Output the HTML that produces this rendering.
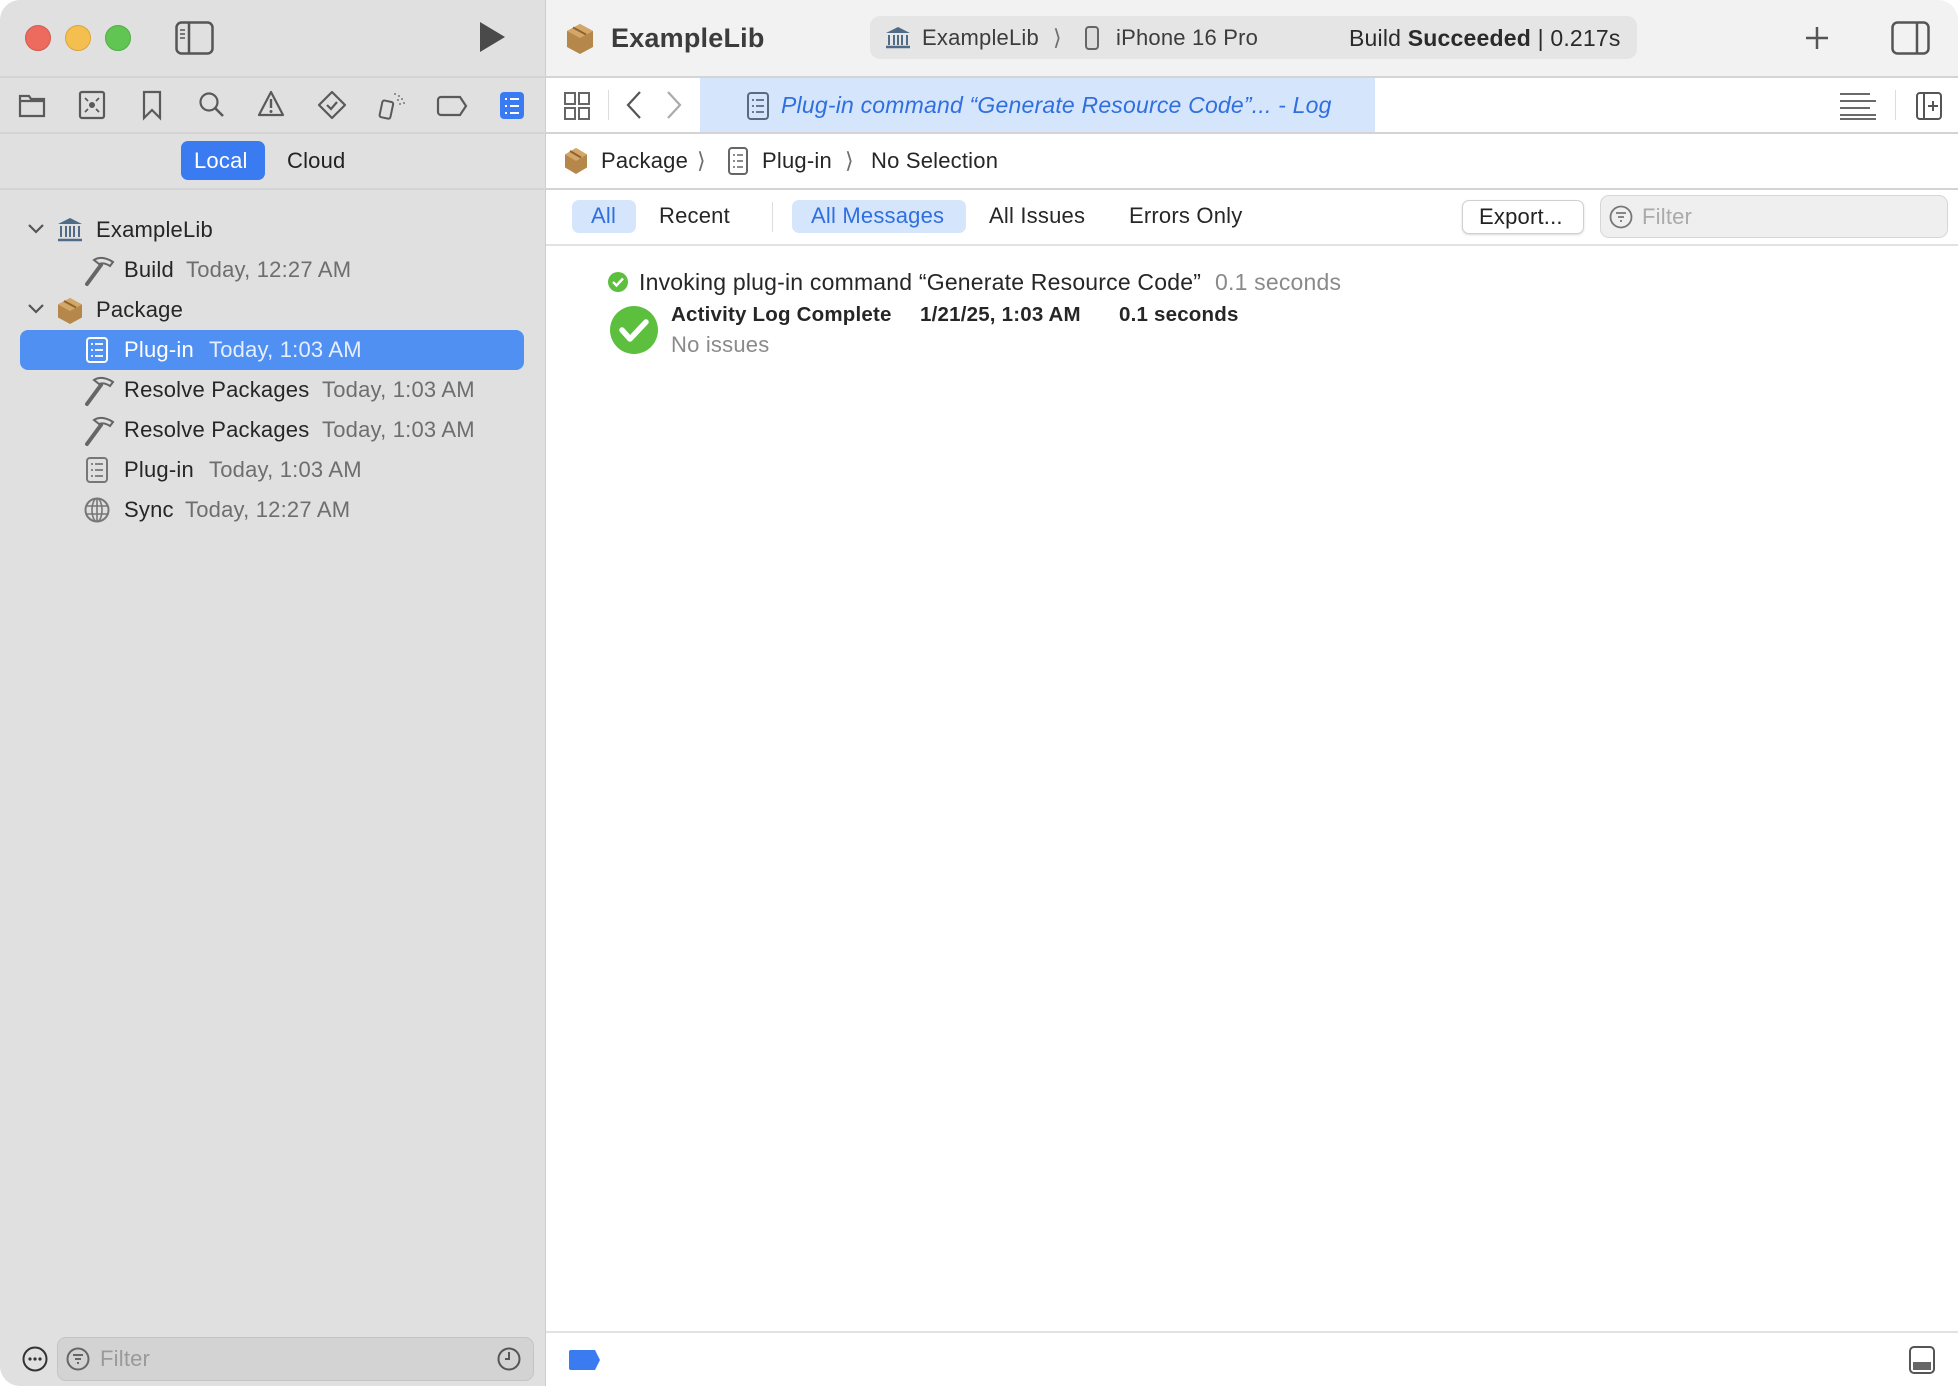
<!DOCTYPE html>
<html><head><meta charset="utf-8"><style>
*{box-sizing:border-box;margin:0;padding:0}
body{width:1958px;height:1386px;background:#fff;font-family:"Liberation Sans",sans-serif;position:relative;overflow:hidden;color:#262626}
.a{position:absolute}
.t{position:absolute;font-size:22px;line-height:24px;white-space:nowrap;letter-spacing:0.2px}
.g{color:#6e6e6e}
svg{position:absolute;overflow:visible}
</style></head><body>
<div class="a" style="left:0;top:0;width:546px;height:1386px;background:#e0e0e0;border-top-left-radius:20px;border-bottom-left-radius:20px"></div>
<div class="a" style="left:546px;top:0;width:1412px;height:77px;background:#f2f2f2;border-top-right-radius:20px"></div>
<div class="a" style="left:545px;top:0;width:1px;height:1386px;background:#cdcdcd"></div>
<div class="a" style="left:0;top:76px;width:1958px;height:2px;background:#d4d4d4"></div>
<div class="a" style="left:0;top:132px;width:1958px;height:2px;background:#d4d4d4"></div>
<div class="a" style="left:0;top:188px;width:1958px;height:2px;background:#d4d4d4"></div>
<div class="a" style="left:546px;top:244px;width:1412px;height:2px;background:#e2e2e2"></div>
<div class="a" style="left:546px;top:1331px;width:1412px;height:2px;background:#e2e2e2"></div>

<div class="a" style="left:25px;top:25px;width:26px;height:26px;border-radius:50%;background:#ec6a5e;border:1px solid #d55a4e"></div>
<div class="a" style="left:65px;top:25px;width:26px;height:26px;border-radius:50%;background:#f4bf4f;border:1px solid #d9a63c"></div>
<div class="a" style="left:105px;top:25px;width:26px;height:26px;border-radius:50%;background:#61c554;border:1px solid #4fae44"></div>
<svg style="left:175px;top:21px" width="40" height="34"><rect x="1.5" y="1.5" width="36" height="31" rx="5" fill="none" stroke="#555" stroke-width="2.5"/><line x1="14" y1="2" x2="14" y2="32" stroke="#555" stroke-width="2.5"/><path d="M5 9h5M5 13h5M5 17h5" stroke="#555" stroke-width="1.6"/></svg>
<svg style="left:480px;top:22px" width="26" height="30"><path d="M0 0L25 15L0 30Z" fill="#4a4a4a"/></svg>

<svg style="left:567px;top:24px" width="26" height="30"><path d="M13 0L26 7V23L13 30L0 23V7Z" fill="#b5874a"/><path d="M13 0L26 7L13 14L0 7Z" fill="#d4a668"/><path d="M6 3.5L19 10.5" stroke="#8a6530" stroke-width="2"/></svg>
<div class="t" style="left:611px;top:23px;font-size:27px;line-height:30px;font-weight:bold;color:#3c3c3c">ExampleLib</div>
<div class="a" style="left:870px;top:16px;width:767px;height:43px;border-radius:10px;background:#e5e5e5"></div>
<svg style="left:886px;top:27px" width="24" height="22"><path d="M12 0L24 6H0Z" fill="#4f6b85"/><path d="M3 8v10M8 8v10M12 8v10M16 8v10M21 8v10" stroke="#4f6b85" stroke-width="2"/><path d="M0 20h24" stroke="#4f6b85" stroke-width="2.5"/></svg>
<div class="t" style="left:922px;top:26px;color:#3c3c3c">ExampleLib</div>
<div class="t g" style="left:1053px;top:26px">⟩</div>
<svg style="left:1085px;top:26px" width="14" height="24"><rect x="1" y="1" width="12" height="22" rx="3" fill="#ddd" stroke="#666" stroke-width="2"/></svg>
<div class="t" style="left:1116px;top:26px;color:#3c3c3c">iPhone 16 Pro</div>
<div class="t" style="left:1349px;top:26px;color:#2a2a2a;font-size:23px">Build <b>Succeeded</b> | 0.217s</div>
<svg style="left:1805px;top:26px" width="24" height="24"><path d="M12 1v22M1 12h22" stroke="#555" stroke-width="2.5"/></svg>
<svg style="left:1891px;top:21px" width="40" height="34"><rect x="1.5" y="1.5" width="36" height="31" rx="5" fill="none" stroke="#555" stroke-width="2.5"/><line x1="26" y1="2" x2="26" y2="32" stroke="#555" stroke-width="2.5"/></svg>

<svg style="left:18px;top:92px" width="28" height="26"><path d="M2 4h9l2 3h13v17H2Z M2 9h24" fill="none" stroke="#5a5a5a" stroke-width="2.2"/></svg>
<svg style="left:79px;top:91px" width="26" height="28"><rect x="1" y="1" width="24" height="26" rx="2" fill="none" stroke="#5a5a5a" stroke-width="2.2"/><circle cx="13" cy="14" r="3" fill="#5a5a5a"/><path d="M6 7l3 3M20 7l-3 3M6 21l3-3M20 21l-3-3" stroke="#5a5a5a" stroke-width="1.8"/></svg>
<svg style="left:143px;top:91px" width="18" height="28"><path d="M1 1h16v26l-8-8-8 8Z" fill="none" stroke="#5a5a5a" stroke-width="2.2"/></svg>
<svg style="left:199px;top:92px" width="26" height="26"><circle cx="10" cy="10" r="8.5" fill="none" stroke="#5a5a5a" stroke-width="2.2"/><path d="M16 16l8 8" stroke="#5a5a5a" stroke-width="2.6"/></svg>
<svg style="left:258px;top:91px" width="26" height="26"><path d="M13 1L25 24H1Z" fill="none" stroke="#5a5a5a" stroke-width="2.2" stroke-linejoin="round"/><path d="M13 8v9" stroke="#5a5a5a" stroke-width="2.4"/><circle cx="13" cy="20.5" r="1.5" fill="#5a5a5a"/></svg>
<svg style="left:318px;top:91px" width="28" height="28"><path d="M14 1L27 14L14 27L1 14Z" fill="none" stroke="#5a5a5a" stroke-width="2.2" stroke-linejoin="round"/><path d="M9 14l4 4 6-7" fill="none" stroke="#5a5a5a" stroke-width="2.2"/></svg>
<svg style="left:378px;top:92px" width="30" height="28"><rect x="3" y="9" width="11" height="17" rx="2" transform="rotate(12 8 17)" fill="none" stroke="#5a5a5a" stroke-width="2"/><path d="M16 2h2M20 4h2M19 8h2M23 7h2M21 12h2M25 11h2" stroke="#777" stroke-width="1.6"/></svg>
<svg style="left:437px;top:96px" width="30" height="20"><path d="M4 1h19l6 9-6 9H4a3 3 0 01-3-3V4a3 3 0 013-3Z" fill="none" stroke="#5a5a5a" stroke-width="2.2"/></svg>
<div class="a" style="left:500px;top:92px;width:24px;height:27px;border-radius:4px;background:#3a7bf2"></div>
<svg style="left:505px;top:97px" width="14" height="18"><path d="M0 2h2M5 2h9M0 9h2M5 9h9M0 16h2M5 16h9" stroke="#fff" stroke-width="2"/></svg>

<div class="a" style="left:181px;top:141px;width:84px;height:39px;border-radius:7px;background:#3a7bf2"></div>
<div class="t" style="left:194px;top:149px;color:#fff">Local</div>
<div class="t" style="left:287px;top:149px;color:#222">Cloud</div>

<div class="a" style="left:20px;top:330px;width:504px;height:40px;border-radius:8px;background:#5090f2"></div>
<svg style="left:28px;top:224px" width="16" height="10"><path d="M1 1l7 7 7-7" fill="none" stroke="#555" stroke-width="2.2"/></svg>
<svg style="left:28px;top:304px" width="16" height="10"><path d="M1 1l7 7 7-7" fill="none" stroke="#555" stroke-width="2.2"/></svg>
<svg style="left:58px;top:218px" width="24" height="24"><path d="M12 0L24 6H0Z" fill="#4f6b85"/><path d="M3 8v11M8 8v11M12 8v11M16 8v11M21 8v11" stroke="#4f6b85" stroke-width="2"/><path d="M0 22h24" stroke="#4f6b85" stroke-width="2.5"/></svg>
<div class="t" style="left:96px;top:218px">ExampleLib</div>
<svg style="left:58px;top:298px" width="24" height="26"><path d="M12 0L24 6.5V19.5L12 26L0 19.5V6.5Z" fill="#b5874a"/><path d="M12 0L24 6.5L12 13L0 6.5Z" fill="#d4a668"/><path d="M6 3L18 9.5" stroke="#8a6530" stroke-width="2"/></svg>
<div class="t" style="left:96px;top:298px">Package</div>

<svg style="left:84px;top:256px" width="30" height="30"><path d="M3 28L17 9" stroke="#666" stroke-width="4" stroke-linecap="round"/><path d="M10 4Q18 -1 29 6L26 10Q20 6 15 8Z" fill="none" stroke="#666" stroke-width="2"/></svg>
<div class="t" style="left:124px;top:258px">Build</div><div class="t g" style="left:186px;top:258px">Today, 12:27 AM</div>

<svg style="left:86px;top:337px" width="22" height="26"><rect x="1" y="1" width="20" height="24" rx="3" fill="none" stroke="#fff" stroke-width="2"/><path d="M5 7h2M9 7h8M5 13h2M9 13h8M5 19h2M9 19h8" stroke="#fff" stroke-width="1.8"/></svg>
<div class="t" style="left:124px;top:338px;color:#fff">Plug-in</div><div class="t" style="left:209px;top:338px;color:#e6efff">Today, 1:03 AM</div>

<svg style="left:84px;top:376px" width="30" height="30"><path d="M3 28L17 9" stroke="#666" stroke-width="4" stroke-linecap="round"/><path d="M10 4Q18 -1 29 6L26 10Q20 6 15 8Z" fill="none" stroke="#666" stroke-width="2"/></svg>
<div class="t" style="left:124px;top:378px">Resolve Packages</div><div class="t g" style="left:322px;top:378px">Today, 1:03 AM</div>
<svg style="left:84px;top:416px" width="30" height="30"><path d="M3 28L17 9" stroke="#666" stroke-width="4" stroke-linecap="round"/><path d="M10 4Q18 -1 29 6L26 10Q20 6 15 8Z" fill="none" stroke="#666" stroke-width="2"/></svg>
<div class="t" style="left:124px;top:418px">Resolve Packages</div><div class="t g" style="left:322px;top:418px">Today, 1:03 AM</div>
<svg style="left:86px;top:457px" width="22" height="26"><rect x="1" y="1" width="20" height="24" rx="3" fill="none" stroke="#777" stroke-width="2"/><path d="M5 7h2M9 7h8M5 13h2M9 13h8M5 19h2M9 19h8" stroke="#777" stroke-width="1.8"/></svg>
<div class="t" style="left:124px;top:458px">Plug-in</div><div class="t g" style="left:209px;top:458px">Today, 1:03 AM</div>
<svg style="left:84px;top:497px" width="26" height="26"><circle cx="13" cy="13" r="11.5" fill="none" stroke="#777" stroke-width="2"/><ellipse cx="13" cy="13" rx="5" ry="11.5" fill="none" stroke="#777" stroke-width="1.6"/><path d="M2 9h22M2 17h22M13 1v24" stroke="#777" stroke-width="1.6"/></svg>
<div class="t" style="left:124px;top:498px">Sync</div><div class="t g" style="left:185px;top:498px">Today, 12:27 AM</div>

<svg style="left:22px;top:1346px" width="26" height="26"><circle cx="13" cy="13" r="11.5" fill="none" stroke="#333" stroke-width="2"/><circle cx="8" cy="13" r="1.6" fill="#333"/><circle cx="13" cy="13" r="1.6" fill="#333"/><circle cx="18" cy="13" r="1.6" fill="#333"/></svg>
<div class="a" style="left:57px;top:1337px;width:477px;height:44px;border-radius:9px;background:#d3d3d3;border:1px solid #c4c4c4"></div>
<svg style="left:66px;top:1347px" width="24" height="24"><circle cx="12" cy="12" r="10.5" fill="none" stroke="#666" stroke-width="2"/><path d="M7 8h10M9 12h6M11 16h2" stroke="#666" stroke-width="2"/></svg>
<div class="t" style="left:100px;top:1347px;color:#9a9a9a">Filter</div>
<svg style="left:497px;top:1347px" width="24" height="24"><circle cx="12" cy="12" r="10.5" fill="none" stroke="#555" stroke-width="2"/><path d="M12 5v7H8" fill="none" stroke="#555" stroke-width="2"/></svg>

<svg style="left:564px;top:92px" width="26" height="28"><rect x="1" y="1" width="10" height="11" fill="none" stroke="#666" stroke-width="2"/><rect x="15" y="1" width="10" height="11" fill="none" stroke="#666" stroke-width="2"/><rect x="1" y="16" width="10" height="11" fill="none" stroke="#666" stroke-width="2"/><rect x="15" y="16" width="10" height="11" fill="none" stroke="#666" stroke-width="2"/></svg>
<div class="a" style="left:608px;top:90px;width:1px;height:30px;background:#ddd"></div>
<svg style="left:626px;top:91px" width="16" height="28"><path d="M14 1L2 14L14 27" fill="none" stroke="#555" stroke-width="2.2"/></svg>
<svg style="left:666px;top:91px" width="16" height="28"><path d="M2 1L14 14L2 27" fill="none" stroke="#aaa" stroke-width="2.2"/></svg>
<div class="a" style="left:700px;top:78px;width:675px;height:54px;background:#d5e5fb"></div>
<svg style="left:747px;top:92px" width="22" height="28"><rect x="1" y="1" width="20" height="26" rx="3" fill="none" stroke="#5a6b80" stroke-width="2"/><path d="M5 8h2M9 8h8M5 14h2M9 14h8M5 20h2M9 20h8" stroke="#5a6b80" stroke-width="1.8"/></svg>
<div class="t" style="left:781px;top:93px;color:#2f6fe0;font-style:italic;font-size:23px">Plug-in command “Generate Resource Code”... - Log</div>
<svg style="left:1840px;top:92px" width="36" height="28"><path d="M0 2h30M0 9h36M0 16h30M0 23h36M0 27h36" stroke="#555" stroke-width="1.8"/></svg>
<div class="a" style="left:1895px;top:90px;width:1px;height:30px;background:#ddd"></div>
<svg style="left:1916px;top:92px" width="26" height="28"><rect x="1" y="1" width="24" height="26" rx="3" fill="none" stroke="#555" stroke-width="2"/><path d="M8 2v24M17 9v10M12 14h10" stroke="#555" stroke-width="2"/></svg>

<svg style="left:565px;top:148px" width="22" height="26"><path d="M11 0L22 6.5V19.5L11 26L0 19.5V6.5Z" fill="#b5874a"/><path d="M11 0L22 6.5L11 13L0 6.5Z" fill="#d4a668"/><path d="M5 3L16 9.5" stroke="#8a6530" stroke-width="2"/></svg>
<div class="t" style="left:601px;top:149px">Package</div>
<div class="t g" style="left:697px;top:149px">⟩</div>
<svg style="left:728px;top:147px" width="20" height="28"><rect x="1" y="1" width="18" height="26" rx="3" fill="none" stroke="#666" stroke-width="2"/><path d="M5 8h2M9 8h6M5 14h2M9 14h6M5 20h2M9 20h6" stroke="#666" stroke-width="1.6"/></svg>
<div class="t" style="left:762px;top:149px">Plug-in</div>
<div class="t g" style="left:845px;top:149px">⟩</div>
<div class="t" style="left:871px;top:149px">No Selection</div>

<div class="a" style="left:572px;top:200px;width:64px;height:33px;border-radius:7px;background:#d5e5fb"></div>
<div class="t" style="left:591px;top:204px;color:#2f6fe0">All</div>
<div class="t" style="left:659px;top:204px">Recent</div>
<div class="a" style="left:772px;top:202px;width:1px;height:30px;background:#ddd"></div>
<div class="a" style="left:792px;top:200px;width:174px;height:33px;border-radius:7px;background:#d5e5fb"></div>
<div class="t" style="left:811px;top:204px;color:#2f6fe0">All Messages</div>
<div class="t" style="left:989px;top:204px">All Issues</div>
<div class="t" style="left:1129px;top:204px">Errors Only</div>
<div class="a" style="left:1462px;top:200px;width:122px;height:34px;border-radius:7px;background:#fff;border:1px solid #d0d0d0;box-shadow:0 1px 2px rgba(0,0,0,.15)"></div>
<div class="t" style="left:1479px;top:205px;color:#222">Export...</div>
<div class="a" style="left:1600px;top:195px;width:348px;height:43px;border-radius:9px;background:#efefef;border:1px solid #d6d6d6"></div>
<svg style="left:1609px;top:205px" width="24" height="24"><circle cx="12" cy="12" r="10.5" fill="none" stroke="#777" stroke-width="1.8"/><path d="M7 8h10M9 12h6M11 16h2" stroke="#777" stroke-width="1.8"/></svg>
<div class="t" style="left:1642px;top:205px;color:#aaa">Filter</div>

<svg style="left:608px;top:272px" width="20" height="20"><circle cx="10" cy="10" r="10" fill="#5cbf3e"/><path d="M5 10l3.5 3.5L15 6.5" fill="none" stroke="#fff" stroke-width="2.4"/></svg>
<div class="t" style="left:639px;top:270px;font-size:23px">Invoking plug-in command “Generate Resource Code”</div>
<div class="t" style="left:1215px;top:270px;color:#8a8a8a;font-size:23px">0.1 seconds</div>
<svg style="left:610px;top:306px" width="48" height="48"><circle cx="24" cy="24" r="24" fill="#5cbf3e"/><path d="M12 24l8 9 16-17" fill="none" stroke="#fff" stroke-width="5.5" stroke-linecap="round" stroke-linejoin="round"/></svg>
<div class="t" style="left:671px;top:303px;font-weight:bold;font-size:20.5px">Activity Log Complete</div>
<div class="t" style="left:920px;top:303px;font-weight:bold;font-size:20.5px">1/21/25, 1:03 AM</div>
<div class="t" style="left:1119px;top:303px;font-weight:bold;font-size:20.5px">0.1 seconds</div>
<div class="t" style="left:671px;top:333px;color:#8a8a8a">No issues</div>

<svg style="left:569px;top:1350px" width="32" height="20"><path d="M0 2a2 2 0 012-2h24l5 10-5 10H2a2 2 0 01-2-2Z" fill="#3a7bf2"/></svg>
<svg style="left:1909px;top:1346px" width="26" height="28"><rect x="1" y="1" width="24" height="26" rx="4" fill="none" stroke="#555" stroke-width="2"/><rect x="4" y="16" width="18" height="8" fill="#666"/></svg>
</body></html>
